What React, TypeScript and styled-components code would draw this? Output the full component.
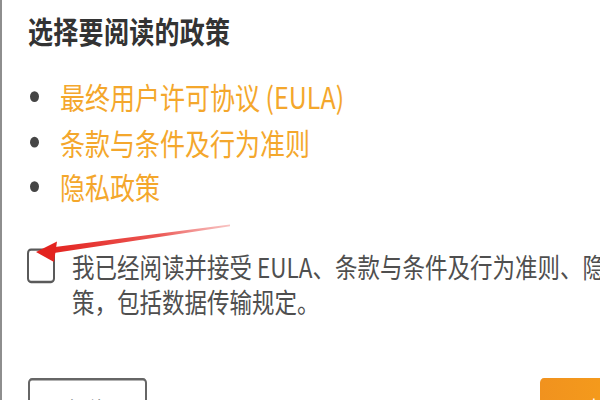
import React from "react";
import styled, { createGlobalStyle } from "styled-components";

const GlobalStyle = createGlobalStyle`
  html, body {
    margin: 0;
    padding: 0;
    background: #ffffff;
    overflow: hidden;
  }
  body {
    font-family: "Noto Sans CJK SC", "Noto Sans", sans-serif;
  }
`;

const Viewport = styled.div`
  position: relative;
  width: 600px;
  height: 400px;
  overflow: hidden;
  background: #ffffff;
`;

const Page = styled.div`
  width: 700px;
  height: 334px;
  box-sizing: border-box;
  border-left: 2px solid #8e8e8e;
  padding: 10px 0 0 26px;
  transform: scaleY(1.2);
  transform-origin: 0 0;
  display: flex;
  flex-direction: column;
`;

const Title = styled.h2`
  margin: 0;
  font-size: 25px;
  line-height: 30px;
  font-weight: 700;
  color: #333333;
  letter-spacing: 0.3px;
`;

const PolicyList = styled.ul`
  list-style: none;
  margin: 22px 0 0 0;
  padding: 0;
  display: flex;
  flex-direction: column;
`;

const PolicyItem = styled.li`
  display: flex;
  align-items: center;
  height: 37.5px;
  font-size: 25px;
  line-height: 37.5px;
  color: #f4a72c;
  &::before {
    content: "";
    width: 9px;
    height: 9px;
    border-radius: 50%;
    background: #454545;
    margin: 0 21px 0 2px;
    flex: none;
  }
`;

const AgreeRow = styled.label`
  display: flex;
  align-items: flex-start;
  gap: 17px;
  margin-top: 32px;
`;

const CheckBox = styled.span`
  flex: none;
  width: 28px;
  height: 29px;
  box-sizing: border-box;
  border: 2px solid #5a5a5a;
  border-radius: 4px;
  margin-left: -1px;
  background: #ffffff;
`;

const AgreeText = styled.div`
  margin-top: 1px;
  font-size: 22.5px;
  line-height: 29.5px;
  color: #4f4f4f;
  white-space: nowrap;
`;

const ButtonRow = styled.div`
  display: flex;
  gap: 393px;
  margin-top: 48px;
`;

const Button = styled.button<{ $primary?: boolean }>`
  flex: none;
  width: ${(p) => (p.$primary ? "140px" : "119px")};
  height: 52px;
  box-sizing: border-box;
  border-radius: 4px;
  font-family: "Noto Sans CJK SC", "Noto Sans", sans-serif;
  font-size: 20px;
  line-height: 50px;
  padding: 0;
  color: ${(p) => (p.$primary ? "#ffffff" : "#333333")};
  border: ${(p) => (p.$primary ? "none" : "2px solid #666666")};
  background: ${(p) =>
    p.$primary ? "linear-gradient(90deg, #f1921e, #f8a419)" : "#ffffff"};
`;

const Overlay = styled.svg`
  position: absolute;
  left: 0;
  top: 0;
  pointer-events: none;
`;

function Arrow() {
  return (
    <Overlay width="600" height="400" viewBox="0 0 600 400">
      <defs>
        <linearGradient id="shaft" x1="230" y1="225" x2="50" y2="250" gradientUnits="userSpaceOnUse">
          <stop offset="0" stopColor="#f07a78" stopOpacity="0.45" />
          <stop offset="0.4" stopColor="#e9433f" stopOpacity="0.9" />
          <stop offset="1" stopColor="#e3231f" />
        </linearGradient>
      </defs>
      <polygon points="230,224.4 230,226.2 54,253 53,247.3" fill="url(#shaft)" />
      <polygon points="36,252 57,241.5 54,262" fill="#e3231f" />
    </Overlay>
  );
}

export default function App() {
  return (
    <Viewport>
      <GlobalStyle />
      <Page>
        <Title>选择要阅读的政策</Title>
        <PolicyList>
          <PolicyItem>最终用户许可协议 (EULA)</PolicyItem>
          <PolicyItem>条款与条件及行为准则</PolicyItem>
          <PolicyItem>隐私政策</PolicyItem>
        </PolicyList>
        <AgreeRow>
          <CheckBox />
          <AgreeText>
            我已经阅读并接受 EULA、条款与条件及行为准则、隐私政
            <br />
            策，包括数据传输规定。
          </AgreeText>
        </AgreeRow>
        <ButtonRow>
          <Button>拒绝</Button>
          <Button $primary>接受</Button>
        </ButtonRow>
      </Page>
      <Arrow />
    </Viewport>
  );
}
